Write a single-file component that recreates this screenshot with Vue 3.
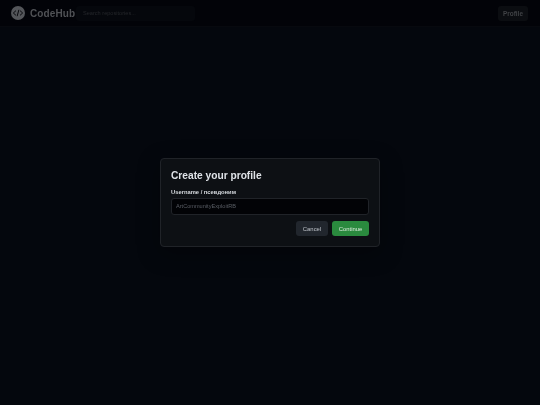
<script setup>
const username = 'ArtCommunityExploitRB'
</script>

<template>
  <div class="page">
    <header class="topbar">
      <div class="brand">
        <svg class="logo" viewBox="0 0 24 24" width="14" height="14" aria-hidden="true">
          <circle cx="12" cy="12" r="12" fill="#54565a" />
          <path d="M8.500 8 4 12l4.500 4M15.500 8l4.500 4-4.500 4M13.500 6.500l-3 11" fill="none" stroke="#08090d" stroke-width="1.7" />
        </svg>
        <span class="brand-name">CodeHub</span>
      </div>
      <div class="search">Search repositories...</div>
      <button class="profile">Profile</button>
    </header>
    <main class="content"></main>
    <div class="overlay">
      <section class="modal">
        <h2 class="title">Create your profile</h2>
        <label class="label">Username / псевдоним</label>
        <div class="input">{{ username }}</div>
        <div class="actions">
          <button class="btn cancel">Cancel</button>
          <button class="btn continue">Continue</button>
        </div>
      </section>
    </div>
  </div>
</template>

<style>
html, body { margin: 0; background: #04070d; }
</style>

<style scoped>
.page {
  position: relative;
  width: 540px;
  height: 405px;
  overflow: hidden;
  display: flex;
  flex-direction: column;
  background: #04070d;
  font-family: "Liberation Sans", Arial, sans-serif;
}
.topbar {
  height: 27px;
  box-sizing: border-box;
  display: flex;
  align-items: center;
  padding: 0 12px 0 11px;
  background: #020308;
  border-bottom: 1px solid #07090e;
  will-change: transform;
}
.brand { display: flex; align-items: center; gap: 5px; width: 65px; }
.logo { flex: none; }
.brand-name { color: #505256; font-size: 10px; font-weight: 700; letter-spacing: 0.1px; }
.search {
  width: 119px;
  height: 15px;
  line-height: 15px;
  padding-left: 7px;
  box-sizing: border-box;
  background: #05070c;
  border-radius: 3px;
  color: #25272b;
  font-size: 5.600px;
}
.profile {
  margin-left: auto;
  width: 30px;
  height: 15px;
  padding: 0;
  border: none;
  border-radius: 3px;
  background: #0b0d11;
  color: #404246;
  font: 700 6.400px "Liberation Sans", Arial, sans-serif;
}
.content { flex: 1; }
.overlay {
  position: absolute;
  inset: 0;
  display: flex;
  align-items: center;
  justify-content: center;
}
.modal {
  width: 220px;
  height: 89px;
  box-sizing: border-box;
  padding: 10px;
  background: #0d1014;
  border: 1px solid #202328;
  border-radius: 4px;
  box-shadow: 0 6px 22px rgba(0, 0, 0, 0.35);
  will-change: transform;
}
.title {
  margin: 0 0 6px;
  font-size: 10.200px;
  line-height: 13px;
  font-weight: 700;
  color: #dfe3e8;
}
.label {
  display: block;
  margin-bottom: 2px;
  font-size: 5.800px;
  line-height: 8px;
  font-weight: 700;
  color: #d5d9de;
}
.input {
  height: 17px;
  line-height: 15px;
  box-sizing: border-box;
  padding-left: 4px;
  background: #020306;
  border: 1px solid #202328;
  border-radius: 3px;
  color: #5b5f66;
  font-size: 5.600px;
}
.actions { display: flex; justify-content: flex-end; gap: 4px; margin-top: 6px; }
.btn {
  height: 15px;
  padding: 0;
  border: none;
  border-radius: 3px;
  font: 400 5.900px "Liberation Sans", Arial, sans-serif;
}
.cancel { width: 32px; background: #21262d; color: #bfc4ca; }
.continue { width: 37px; background: #2a8a3e; color: #dcebdd; }
</style>
